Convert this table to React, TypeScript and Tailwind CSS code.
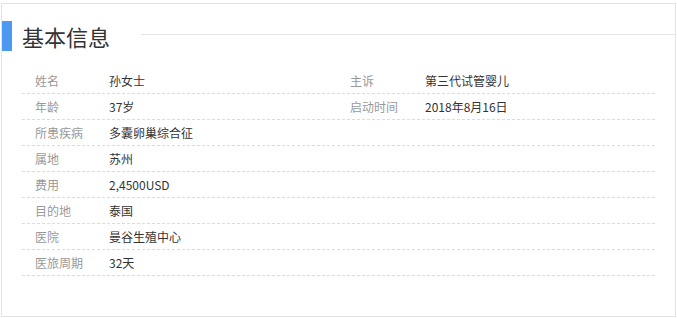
const rows: [string, string, string?, string?][] = [
  ["姓名", "孙女士", "主诉", "第三代试管婴儿"],
  ["年龄", "37岁", "启动时间", "2018年8月16日"],
  ["所患疾病", "多囊卵巢综合征"],
  ["属地", "苏州"],
  ["费用", "2,4500USD"],
  ["目的地", "泰国"],
  ["医院", "曼谷生殖中心"],
  ["医旅周期", "32天"],
];

export default function App() {
  return (
    <div
      className="w-[677px] h-[318px] bg-white pt-[3px] pl-[1px]"
      style={{ fontFamily: '"Noto Sans CJK SC", "Liberation Sans", sans-serif' }}
    >
      <div className="w-[675px] h-[314px] border border-[#e3e3e3] pt-[17px]">
        <div className="flex items-start h-[30px]">
          <div className="w-[10px] h-[30px] bg-[#4b99f0]" />
          <h2 className="ml-[10px] text-[22px] leading-[30px] text-[#333]">基本信息</h2>
          <div className="flex-1 ml-[31px] mt-[13px] h-px bg-[#e6e6e6]" />
        </div>

        <div className="mt-[17px] mx-[20px]">
          {rows.map(([l1, v1, l2, v2]) => (
            <div
              key={l1}
              className="grid grid-cols-[87px_228px_88px_1fr] h-[26px] items-center border-b border-dashed border-[#dcdcdc] text-[12px]"
            >
              <span className="pl-[13px] text-[#999]">{l1}</span>
              <span className="text-[#333]">{v1}</span>
              <span className="pl-[13px] text-[#999]">{l2 ?? ""}</span>
              <span className="text-[#333]">{v2 ?? ""}</span>
            </div>
          ))}
        </div>
      </div>
    </div>
  );
}
